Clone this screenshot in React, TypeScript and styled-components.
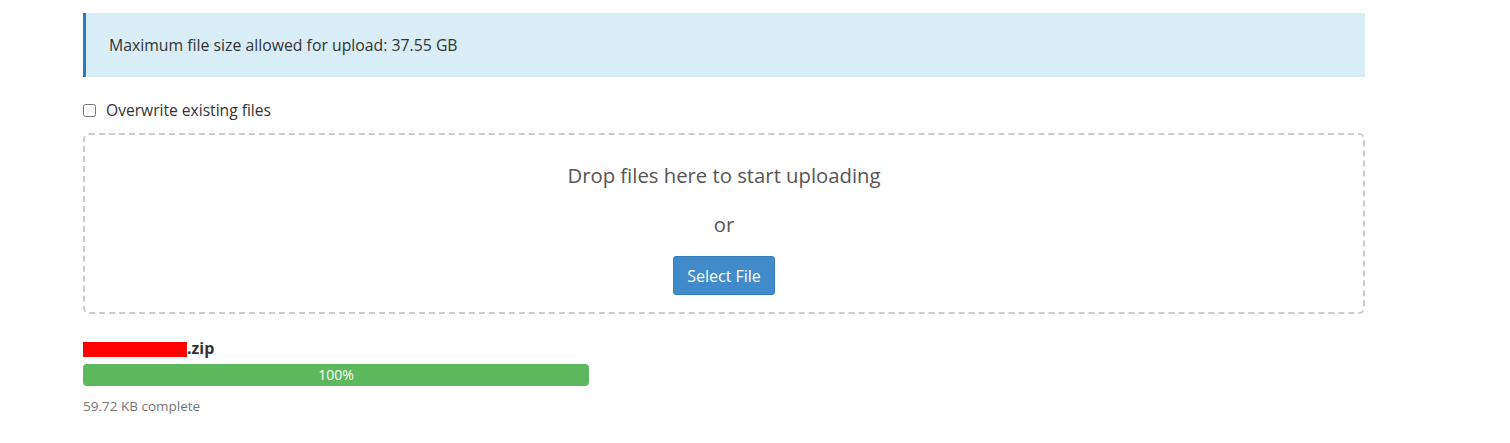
import React from "react";
import styled, { createGlobalStyle } from "styled-components";

const GlobalStyle = createGlobalStyle`
  body {
    margin: 0;
    background: #fff;
    font-family: "Open Sans", "Liberation Sans", sans-serif;
    font-size: 14px;
    color: #333;
  }
`;

const Page = styled.div`
  width: 1282px;
  padding: 13px 0 0 83px;
`;

const InfoAlert = styled.div`
  height: 64px;
  box-sizing: border-box;
  display: flex;
  align-items: center;
  padding-left: 23px;
  background: #d9edf7;
  border-left: 3px solid #2f7bbf;
  color: #333;
  font-size: 15.8px;
`;

const CheckRow = styled.label`
  display: flex;
  align-items: center;
  gap: 10px;
  margin-top: 23px;
  height: 20px;
  font-size: 15.6px;
  color: #333;
`;

const CheckBox = styled.input`
  width: 13px;
  height: 13px;
  margin: 0;
`;

const DropZone = styled.div`
  margin-top: 13px;
  height: 181px;
  box-sizing: border-box;
  border: 2px dashed #cccccc;
  border-radius: 6px;
  display: flex;
  flex-direction: column;
  align-items: center;
  padding-top: 26px;
`;

const DropText = styled.div`
  font-size: 20.3px;
  line-height: 28px;
  color: #555;
`;

const OrText = styled(DropText)`
  margin-top: 21px;
`;

const SelectButton = styled.button`
  margin-top: 18px;
  width: 102px;
  height: 39px;
  background: #428bca;
  border: 1px solid #357ebd;
  border-radius: 3px;
  color: #fff;
  font-family: "Open Sans", "Liberation Sans", sans-serif;
  font-size: 16px;
  padding: 0;
`;

const FileName = styled.div`
  margin-top: 24px;
  display: flex;
  align-items: center;
  font-weight: bold;
  font-size: 16px;
  line-height: 20px;
  color: #333;
`;

const Redacted = styled.span`
  display: inline-block;
  width: 104px;
  height: 15px;
  background: #ff0000;
  margin-top: 2px;
`;

const Track = styled.div`
  margin-top: 6px;
  width: 506px;
  height: 22px;
  border-radius: 4px;
  background: #f5f5f5;
  overflow: hidden;
`;

const Fill = styled.div`
  height: 100%;
  background: #5cb85c;
  color: #fff;
  font-size: 14px;
  line-height: 22px;
  text-align: center;
`;

const Complete = styled.div`
  margin-top: 11px;
  font-size: 13.5px;
  color: #777;
`;

const App: React.FC = () => {
  const percent = 100;
  return (
    <Page>
      <GlobalStyle />
      <InfoAlert>Maximum file size allowed for upload: 37.55 GB</InfoAlert>
      <CheckRow>
        <CheckBox type="checkbox" />
        Overwrite existing files
      </CheckRow>
      <DropZone>
        <DropText>Drop files here to start uploading</DropText>
        <OrText>or</OrText>
        <SelectButton>Select File</SelectButton>
      </DropZone>
      <FileName>
        <Redacted />
        .zip
      </FileName>
      <Track>
        <Fill style={{ width: `${percent}%` }}>{percent}%</Fill>
      </Track>
      <Complete>59.72 KB complete</Complete>
    </Page>
  );
};

export default App;
